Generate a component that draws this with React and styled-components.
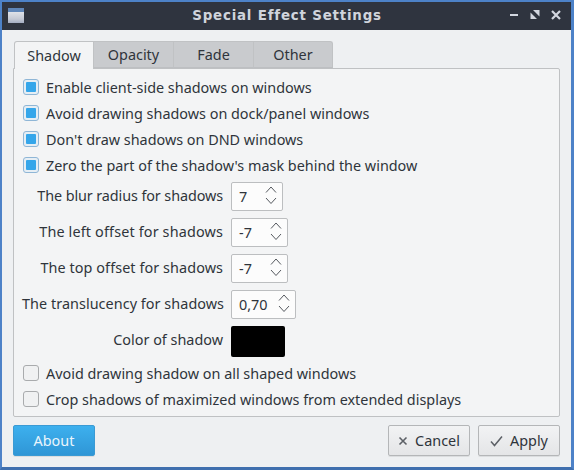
import React from 'react';
import styled, { createGlobalStyle } from 'styled-components';

const Global = createGlobalStyle`
  html, body { margin: 0; padding: 0; background: #eef0f2; }
  * { box-sizing: border-box; }
`;
const Win = styled.div`
  width: 574px; height: 470px; display: flex; flex-direction: column;
  border: 2px solid #4d82c8; border-right-width: 3px; border-bottom-width: 3px; border-bottom-color: #3f6fae;
  background: #eef0f2; color: #2f343b;
  font-family: "Noto Sans", sans-serif; font-size: 14.4px; overflow: hidden;
`;
const TitleBar = styled.div`
  height: 28px; flex: none; background: #2f343f; display: grid; grid-template-columns: 1fr auto 1fr; align-items: center; padding: 0 7px 2px 6px;
`;
const AppIcon = styled.div`
  width: 16px; height: 15px; background: linear-gradient(#5f86b8 0 4px, #dfe2e8 4px, #c4c9d4 11px, #a4adc2);
`;
const Title = styled.div`
  color: #d0d4dc; font-weight: 700; font-size: 13.4px; letter-spacing: 0.8px; font-family: "DejaVu Sans", sans-serif; padding-left: 2px;
`;
const WinButtons = styled.div`
  display: flex; gap: 9px; align-items: center; justify-content: flex-end; padding-right: 2px;
`;
const Content = styled.div`
  flex: 1; display: flex; flex-direction: column; padding: 11px 11px 0 11px;
`;
const Tabs = styled.div`
  display: flex; height: 28px; padding-left: 1px; position: relative; z-index: 1;
`;
const Tab = styled.div`
  height: ${p => (p.$active ? '28px' : '27px')};
  display: flex; align-items: center; justify-content: center;
  background: ${p => (p.$active ? '#f3f4f5' : '#c9cbce')};
  border: 1px solid #c0c2c4;
  border-bottom: ${p => (p.$active ? 'none' : '1px solid #bdbfc2')};
  border-left-width: ${p => (p.$first ? '1px' : '0')};
  border-radius: ${p => (p.$first ? '3px 0 0 0' : p.$last ? '0 3px 0 0' : '0')};
  padding-bottom: 1px;
  width: ${p => p.$w}px;
`;
const Pane = styled.div`
  height: 349px; margin-top: -1px; background: #f3f4f5; border: 1px solid #bfc1c3; border-radius: 0 2px 2px 2px;
  padding: 5px 8px 0 8px; display: flex; flex-direction: column;
`;
const CheckRow = styled.div`
  height: 26px; display: flex; align-items: center; gap: 7px; padding-left: 1px; flex: none; white-space: nowrap;
  margin-top: ${p => p.$mt || 0}px;
`;
const Box = styled.span`
  width: 16px; height: 16px; flex: none; border-radius: 3px; display: flex; align-items: center; justify-content: center;
  border: 1px solid ${p => (p.$on ? '#8fb6d6' : '#a9abad')};
  background: ${p => (p.$on ? '#e6eef4' : '#f0f1f2')};
  &::after { content: ''; display: ${p => (p.$on ? 'block' : 'none')}; width: 10px; height: 10px; background: #35a6ea; border-radius: 1px; }
`;
const FormRow = styled.div`
  height: 36px; flex: none; display: flex; align-items: center;
`;
const Label = styled.div`
  width: 201px; text-align: right; flex: none; padding-bottom: 2px; white-space: nowrap;
  letter-spacing: ${p => p.$ls || 0}px;
`;
const Spin = styled.div`
  margin-left: 8px; height: 29px; width: ${p => p.$w}px; background: #fcfcfc; border: 1px solid #bcbec0; border-radius: 2px;
  display: flex; align-items: center; justify-content: space-between; padding: 0 4px 0 7px;
`;
const SwatchBtn = styled.div`
  margin-left: 8px; width: 54px; height: 31px; background: #000; border-radius: 2px; margin-top: 2px;
`;
const Footer = styled.div`
  display: flex; margin-top: 8px; align-items: center; gap: 8px;
`;
const Btn = styled.div`
  height: 31px; width: ${p => p.$w}px; border-radius: 2px; display: flex; align-items: center; justify-content: center; gap: 7px;
  border: 1px solid ${p => (p.$primary ? '#3a9ad4' : '#b4b6b8')};
  background: ${p => (p.$primary ? 'linear-gradient(#3db0ee, #2f96d6)' : 'linear-gradient(#f2f3f4, #e4e5e7)')};
  color: ${p => (p.$primary ? '#eaf5fc' : '#2f343b')};
  margin-right: ${p => (p.$push ? 'auto' : '0')};
  box-shadow: 0 1px 0 rgba(0,0,0,.08);
`;
const Arrows = () => (
  <svg width="14" height="24" viewBox="0 0 14 24" fill="none" stroke="#55595f" strokeWidth="1">
    <path d="M2 8.5 7 3 12 8.5" />
    <path d="M2 14 7 19.5 12 14" />
  </svg>
);
const Spinner = ({ v, w }) => <Spin $w={w}><span>{v}</span><Arrows /></Spin>;
const checks1 = [
  'Enable client-side shadows on windows',
  'Avoid drawing shadows on dock/panel windows',
  "Don't draw shadows on DND windows",
  "Zero the part of the shadow's mask behind the window",
];
const tabs = [['Shadow', 80], ['Opacity', 80], ['Fade', 80], ['Other', 79]];

export default function App() {
  return (
    <Win>
      <Global />
      <TitleBar>
        <AppIcon />
        <Title>Special Effect Settings</Title>
        <WinButtons>
          <svg width="12" height="12" viewBox="0 0 12 12"><rect x="2" y="5" width="8" height="2" fill="#d3d7e0" /></svg>
          <svg width="12" height="12" viewBox="0 0 12 12" fill="#d3d7e0"><path d="M4 1H10.5V7.5zM1.5 3.5 8 10H1.5z" /></svg>
          <svg width="12" height="12" viewBox="0 0 12 12" stroke="#d3d7e0" strokeWidth="2.2"><path d="M2 2 10 10M10 2 2 10" /></svg>
        </WinButtons>
      </TitleBar>
      <Content>
        <Tabs>
          {tabs.map(([t, w], i) => <Tab key={t} $w={w} $active={i === 0} $first={i === 0} $last={i === 3}>{t}</Tab>)}
        </Tabs>
        <Pane>
          {checks1.map(c => <CheckRow key={c}><Box $on />{c}</CheckRow>)}
          <FormRow><Label $ls={-0.1}>The blur radius for shadows</Label><Spinner v="7" w={52} /></FormRow>
          <FormRow><Label $ls={0.15}>The left offset for shadows</Label><Spinner v="-7" w={57} /></FormRow>
          <FormRow><Label $ls={0.08}>The top offset for shadows</Label><Spinner v="-7" w={57} /></FormRow>
          <FormRow><Label $ls={0.05}>The translucency for shadows</Label><Spinner v="0,70" w={65} /></FormRow>
          <FormRow><Label>Color of shadow</Label><SwatchBtn /></FormRow>
          <CheckRow $mt={2}><Box />Avoid drawing shadow on all shaped windows</CheckRow>
          <CheckRow><Box />Crop shadows of maximized windows from extended displays</CheckRow>
        </Pane>
        <Footer>
          <Btn $primary $push $w={82}>About</Btn>
          <Btn $w={82}>
            <svg width="10" height="10" viewBox="0 0 10 10" stroke="#5c6066" strokeWidth="1.6"><path d="M1.5 1.5 8.5 8.5M8.5 1.5 1.5 8.5" /></svg>
            Cancel
          </Btn>
          <Btn $w={82}>
            <svg width="13" height="12" viewBox="0 0 13 12" fill="none" stroke="#5c6066" strokeWidth="1.5"><path d="M1 6.5 4.5 10.5 12 1.5" /></svg>
            Apply
          </Btn>
        </Footer>
      </Content>
    </Win>
  );
}
